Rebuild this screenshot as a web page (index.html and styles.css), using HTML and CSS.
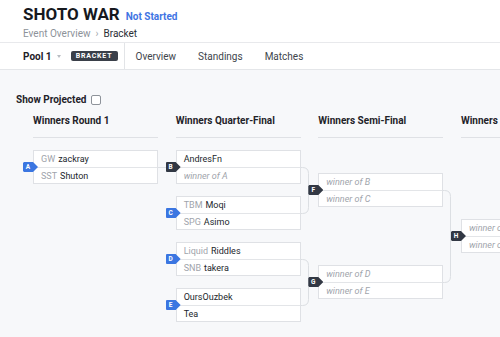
FILE: index.html
```html
<!DOCTYPE html>
<html lang="en">
<head>
<meta charset="utf-8">
<title>SHOTO WAR - Bracket</title>
<link rel="stylesheet" href="styles.css">
</head>
<body>
<header class="top">
  <div class="title-row">
    <h1 class="title">SHOTO WAR</h1>
    <span class="status">Not Started</span>
  </div>
  <nav class="crumbs">
    <span class="crumb">Event Overview</span>
    <span class="crumb-sep">›</span>
    <span class="crumb-current">Bracket</span>
  </nav>
</header>

<div class="tabbar">
  <div class="pool">
    <span class="pool-name">Pool 1</span>
    <span class="caret"></span>
    <span class="tag">BRACKET</span>
  </div>
  <nav class="tabs">
    <span class="tab">Overview</span>
    <span class="tab">Standings</span>
    <span class="tab">Matches</span>
  </nav>
</div>

<main class="main">
  <label class="projected">Show Projected <input type="checkbox" class="check"></label>

  <div class="bracket">
    <svg class="lines" width="640" height="230" viewBox="0 0 640 230">
      <path d="M120 52.5 H136" />
      <path d="M262 52.5 H269.5 Q275.5 52.5 275.5 58.5 V92.5 Q275.5 98.5 269.5 98.5 H262" />
      <path d="M262 144.5 H269.5 Q275.5 144.5 275.5 150.5 V184.5 Q275.5 190.5 269.5 190.5 H262" />
      <path d="M405 75.5 H411.5 Q417.5 75.5 417.5 81.5 V161.5 Q417.5 167.5 411.5 167.5 H405" />
    </svg>

    <section class="round">
      <h2 class="round-title">Winners Round 1</h2>
      <div class="matches">
        <div class="match">
          <span class="badge blue">A</span>
          <div class="slot"><span class="org">GW</span>zackray</div>
          <div class="slot"><span class="org">SST</span>Shuton</div>
        </div>
      </div>
    </section>

    <section class="round">
      <h2 class="round-title">Winners Quarter-Final</h2>
      <div class="matches qf">
        <div class="match">
          <span class="badge dark">B</span>
          <div class="slot">AndresFn</div>
          <div class="slot tbd">winner of A</div>
        </div>
        <div class="match">
          <span class="badge blue">C</span>
          <div class="slot"><span class="org">TBM</span>Moqi</div>
          <div class="slot"><span class="org">SPG</span>Asimo</div>
        </div>
        <div class="match">
          <span class="badge blue">D</span>
          <div class="slot"><span class="org">Liquid</span>Riddles</div>
          <div class="slot"><span class="org">SNB</span>takera</div>
        </div>
        <div class="match">
          <span class="badge blue">E</span>
          <div class="slot">OursOuzbek</div>
          <div class="slot">Tea</div>
        </div>
      </div>
    </section>

    <section class="round">
      <h2 class="round-title">Winners Semi-Final</h2>
      <div class="matches sf">
        <div class="match">
          <span class="badge dark">F</span>
          <div class="slot tbd">winner of B</div>
          <div class="slot tbd">winner of C</div>
        </div>
        <div class="match">
          <span class="badge dark">G</span>
          <div class="slot tbd">winner of D</div>
          <div class="slot tbd">winner of E</div>
        </div>
      </div>
    </section>

    <section class="round">
      <h2 class="round-title">Winners Final</h2>
      <div class="matches wf">
        <div class="match">
          <span class="badge dark">H</span>
          <div class="slot tbd">winner of F</div>
          <div class="slot tbd">winner of G</div>
        </div>
      </div>
    </section>
  </div>
</main>
</body>
</html>
```

FILE: styles.css
```css
html, body {
  margin: 0;
  padding: 0;
  overflow: hidden;
  height: 100%;
}

body {
  font-family: Roboto, "Liberation Sans", Arial, sans-serif;
  color: #1f2329;
  background: #f7f8fa;
}

/* ---------- header ---------- */
.top {
  background: #fff;
  padding: 4px 23px 2px;
}

.title-row {
  display: flex;
  align-items: baseline;
  gap: 6px;
  height: 21px;
}

.title {
  margin: 0;
  font-size: 17px;
  line-height: 21px;
  font-weight: 700;
  color: #16191e;
}

.status {
  font-size: 10px;
  font-weight: 700;
  color: #3f74e3;
}

.crumbs {
  display: flex;
  align-items: center;
  gap: 5px;
  margin-top: 3px;
  font-size: 10px;
  line-height: 12px;
}

.crumb { color: #8d9299; }
.crumb-sep { color: #a3a7ad; font-size: 10px; }
.crumb-current { color: #2a2e35; }

/* ---------- tab bar ---------- */
.tabbar {
  display: flex;
  height: 26px;
  background: #fff;
  border-top: 1px solid #e8e9ec;
  border-bottom: 1px solid #e4e6e9;
  font-size: 10px;
}

.pool {
  display: flex;
  align-items: center;
  padding: 0 6px 0 23px;
}

.pool-name {
  font-weight: 700;
  color: #1d2026;
}

.caret {
  width: 0;
  height: 0;
  margin: 1px 10px 0 5px;
  border-left: 2.5px solid transparent;
  border-right: 2.5px solid transparent;
  border-top: 3px solid #b9bdc3;
}

.tag {
  display: inline-flex;
  align-items: center;
  justify-content: center;
  width: 47px;
  height: 10px;
  border-radius: 2px;
  background: #3a3f49;
  color: #fff;
  font-size: 7px;
  font-weight: 700;
  letter-spacing: 0.8px;
}

.tabs {
  display: flex;
  align-items: center;
  border-left: 1px solid #e2e4e7;
}

.tab {
  padding: 0 11px;
  color: #40454c;
}

/* ---------- main ---------- */
.main {
  padding: 23.5px 16px 0;
}

.projected {
  display: flex;
  align-items: center;
  gap: 5px;
  height: 12px;
  font-size: 10px;
  line-height: 12px;
  font-weight: 700;
  color: #1f2329;
}

.check {
  appearance: none;
  -webkit-appearance: none;
  margin: 0;
  width: 10px;
  height: 10px;
  border: 1px solid #8e939a;
  border-radius: 2px;
  background: #fff;
  box-sizing: border-box;
}

/* ---------- bracket ---------- */
.bracket {
  position: relative;
  display: grid;
  grid-template-columns: repeat(4, 125px);
  column-gap: 17.67px;
  align-items: start;
  margin-top: 9.5px;
  padding-left: 17px;
  width: 600px;
}

.lines {
  position: absolute;
  left: 17px;
  top: 0;
  fill: none;
  stroke: #dcdfe3;
  stroke-width: 1;
  z-index: 0;
}

.round {
  position: relative;
  z-index: 1;
}

.round-title {
  margin: 0;
  padding-bottom: 10px;
  border-bottom: 1px solid #dfe1e5;
  font-size: 10px;
  line-height: 12px;
  font-weight: 700;
  color: #1f2329;
  white-space: nowrap;
}

.matches {
  display: flex;
  flex-direction: column;
  margin-top: 12px;
}

.matches.qf { gap: 12px; }
.matches.sf { margin-top: 35px; gap: 58px; }
.matches.wf { margin-top: 81px; }

.match {
  position: relative;
  background: #fff;
  border: 1px solid #dfe1e5;
}

.slot {
  display: flex;
  align-items: center;
  gap: 3px;
  height: 15px;
  padding-left: 7px;
  font-size: 9px;
  color: #22262c;
  white-space: nowrap;
  overflow: hidden;
}

.slot:first-of-type {
  height: 16px;
  border-bottom: 1px solid #e3e5e8;
}

.org { color: #a0a4ab; }

.tbd {
  color: #a0a4ab;
  font-style: italic;
}

.badge {
  position: absolute;
  left: -11px;
  top: 11px;
  width: 15px;
  height: 10px;
  padding-right: 5px;
  box-sizing: border-box;
  display: flex;
  align-items: center;
  justify-content: center;
  color: #fff;
  font-size: 6.5px;
  font-weight: 700;
  clip-path: polygon(1px 0, 10px 0, 15px 50%, 10px 100%, 1px 100%, 0 calc(100% - 1px), 0 1px);
  z-index: 2;
}

.badge.blue { background: #3b76e1; }
.badge.dark { background: #323844; }
```
